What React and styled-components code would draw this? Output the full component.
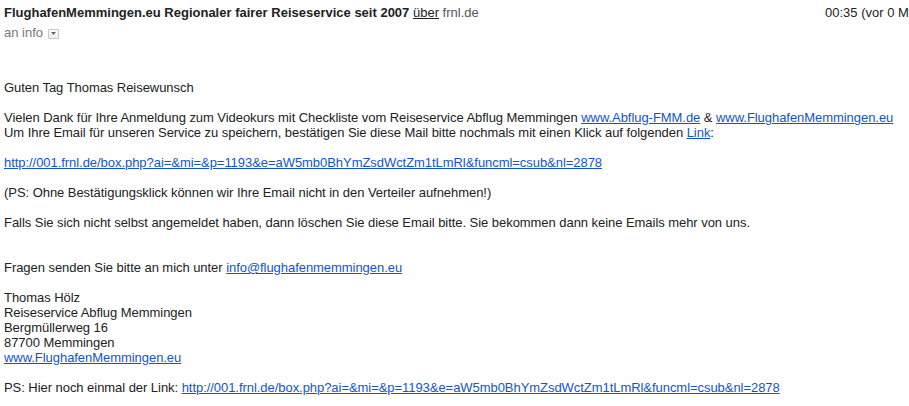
import React from 'react'
import styled, { createGlobalStyle } from 'styled-components'

const GlobalStyle = createGlobalStyle`
  html, body {
    margin: 0;
    padding: 0;
    background: #fff;
  }
  body {
    font-family: "Liberation Sans", Arial, sans-serif;
    font-size: 13px;
    line-height: 15px;
    color: #222;
  }
`

const Mail = styled.div`
  width: 909px;
  height: 406px;
  overflow: hidden;
  padding-top: 5px;
  box-sizing: border-box;
`

const HeaderRow = styled.div`
  display: grid;
  grid-template-columns: 1fr 84px;
  padding-left: 4px;
`

const Sender = styled.div`
  white-space: nowrap;
  overflow: hidden;
`

const SenderName = styled.span`
  font-weight: bold;
  color: #222;
`

const Via = styled.span`
  color: #222;
  text-decoration: underline;
`

const ViaDomain = styled.span`
  color: #555;
`

const Time = styled.div`
  white-space: nowrap;
  overflow: hidden;
  color: #222;
`

const Recipient = styled.div`
  margin-top: 5px;
  padding-left: 4px;
  color: #777;
  display: flex;
  align-items: center;
  gap: 5px;
`

const DropButton = styled.span`
  display: inline-flex;
  align-items: center;
  justify-content: center;
  width: 9px;
  height: 8px;
  border: 1px solid #c6c6c6;
  border-radius: 1px;
  background: linear-gradient(#fcfcfc, #eee);
  margin-top: 2px;
`

const Body = styled.div`
  margin-top: 40px;
  padding-left: 4px;
  letter-spacing: -0.05px;
`

const Para = styled.p`
  margin: 0 0 ${p => (p.$gap ? p.$gap : 15)}px;
  white-space: nowrap;
`

const Link = styled.a`
  color: #15c;
  text-decoration: underline;
`

const url = 'http://001.frnl.de/box.php?ai=&mi=&p=1193&e=aW5mb0BhYmZsdWctZm1tLmRl&funcml=csub&nl=2878'

export default function App() {
  return (
    <Mail>
      <GlobalStyle />
      <HeaderRow>
        <Sender>
          <SenderName>FlughafenMemmingen.eu Regionaler fairer Reiseservice seit 2007</SenderName>{' '}
          <Via>über</Via> <ViaDomain>frnl.de</ViaDomain>
        </Sender>
        <Time>00:35 (vor 0 Minuten)</Time>
      </HeaderRow>
      <Recipient>
        an info
        <DropButton>
          <svg width="5" height="3" viewBox="0 0 5 3">
            <path d="M0 0h5L2.5 3z" fill="#666" />
          </svg>
        </DropButton>
      </Recipient>
      <Body>
        <Para>Guten Tag Thomas Reisewunsch</Para>
        <Para>
          Vielen Dank für Ihre Anmeldung zum Videokurs mit Checkliste vom Reiseservice Abflug Memmingen{' '}
          <Link href="#">www.Abflug-FMM.de</Link> &amp; <Link href="#">www.FlughafenMemmingen.eu</Link>
          <br />
          Um Ihre Email für unseren Service zu speichern, bestätigen Sie diese Mail bitte nochmals mit einen Klick auf folgenden{' '}
          <Link href="#">Link</Link>:
        </Para>
        <Para>
          <Link href="#">{url}</Link>
        </Para>
        <Para>(PS: Ohne Bestätigungsklick können wir Ihre Email nicht in den Verteiler aufnehmen!)</Para>
        <Para $gap={30}>
          Falls Sie sich nicht selbst angemeldet haben, dann löschen Sie diese Email bitte. Sie bekommen dann keine Emails mehr von uns.
        </Para>
        <Para>
          Fragen senden Sie bitte an mich unter <Link href="#">info@flughafenmemmingen.eu</Link>
        </Para>
        <Para>
          Thomas Hölz
          <br />
          Reiseservice Abflug Memmingen
          <br />
          Bergmüllerweg 16
          <br />
          87700 Memmingen
          <br />
          <Link href="#">www.FlughafenMemmingen.eu</Link>
        </Para>
        <Para>
          PS: Hier noch einmal der Link: <Link href="#">{url}</Link>
        </Para>
      </Body>
    </Mail>
  )
}
